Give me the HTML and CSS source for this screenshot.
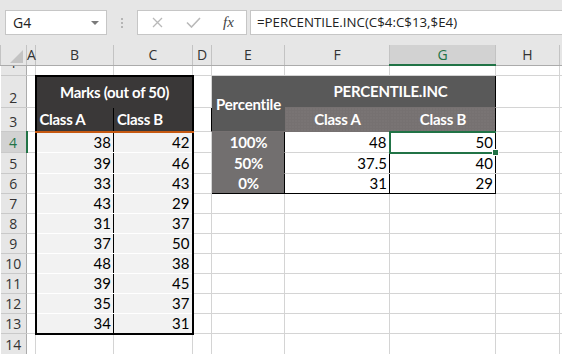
FILE: index.html
```html
<!DOCTYPE html>
<html lang="en">
<head>
    <meta charset="UTF-8">
    <meta name="viewport" content="width=device-width, initial-scale=1.0">
    <title>PERCENTILE.INC</title>
    <link rel="stylesheet" href="styles.css">
</head>
<body>
    <!-- Name box and formula bar -->
    <div class="toolbar">
        <div class="name-box">
            <span>G4</span>
            <span class="drop"></span>
        </div>
        <div class="grip"><span></span><span></span><span></span></div>
        <div class="fx-buttons">
            <svg class="cancel" width="11" height="11" viewBox="0 0 11 11">
                <path d="M1 1 L10 10 M10 1 L1 10" stroke="#b9b9b9" stroke-width="1.3" fill="none"/>
            </svg>
            <svg class="enter" width="15" height="11" viewBox="0 0 15 11">
                <path d="M1 5.5 L5.5 10 L14 1" stroke="#b9b9b9" stroke-width="1.6" fill="none"/>
            </svg>
            <span class="fx">fx</span>
        </div>
        <div class="formula">=PERCENTILE.INC(C$4:C$13,$E4)</div>
    </div>

    <!-- The worksheet grid -->
    <table class="sheet">
        <colgroup>
            <col style="width: 26px">
            <col style="width: 9px">
            <col style="width: 78px">
            <col style="width: 79px">
            <col style="width: 19px">
            <col style="width: 73px">
            <col style="width: 105px">
            <col style="width: 106px">
            <col style="width: 64px">
            <col style="width: 40px">
        </colgroup>
        <tr class="col-head">
            <th class="corner"><span class="tri"></span></th>
            <th class="ch">A</th>
            <th class="ch">B</th>
            <th class="ch">C</th>
            <th class="ch">D</th>
            <th class="ch">E</th>
            <th class="ch">F</th>
            <th class="ch active">G</th>
            <th class="ch">H</th>
            <th class="ch"></th>
        </tr>
        <tr class="row-1">
            <th class="rh"><div class="clip"><div>1</div></div></th>
            <td></td><td></td><td></td><td></td><td></td><td></td><td></td><td></td><td></td>
        </tr>
        <tr class="row-2">
            <th class="rh">2</th>
            <td></td>
            <td class="mk-title" colspan="2">Marks (out of 50)</td>
            <td></td>
            <td class="pc-label" rowspan="2">Percentile</td>
            <td class="pc-title" colspan="2">PERCENTILE.INC</td>
            <td></td><td></td>
        </tr>
        <tr class="row-3">
            <th class="rh">3</th>
            <td></td>
            <td class="mk-head mk-b">Class A</td>
            <td class="mk-head mk-c">Class B</td>
            <td></td>
            <td class="pc-head pc-f">Class A</td>
            <td class="pc-head pc-g">Class B</td>
            <td></td><td></td>
        </tr>
        <tr>
            <th class="rh active">4</th>
            <td></td>
            <td class="mk mk-b">38</td>
            <td class="mk mk-c">42</td>
            <td></td>
            <td class="pc-row">100%</td>
            <td class="pc-val pc-f">48</td>
            <td class="pc-val pc-g sel">50<span class="handle"></span></td>
            <td></td><td></td>
        </tr>
        <tr>
            <th class="rh">5</th>
            <td></td>
            <td class="mk mk-b">39</td>
            <td class="mk mk-c">46</td>
            <td></td>
            <td class="pc-row">50%</td>
            <td class="pc-val pc-f">37.5</td>
            <td class="pc-val pc-g">40</td>
            <td></td><td></td>
        </tr>
        <tr>
            <th class="rh">6</th>
            <td></td>
            <td class="mk mk-b">33</td>
            <td class="mk mk-c">43</td>
            <td></td>
            <td class="pc-row pc-last">0%</td>
            <td class="pc-val pc-f pc-last">31</td>
            <td class="pc-val pc-g pc-last">29</td>
            <td></td><td></td>
        </tr>
        <tr>
            <th class="rh">7</th>
            <td></td>
            <td class="mk mk-b">43</td>
            <td class="mk mk-c">29</td>
            <td></td><td></td><td></td><td></td><td></td><td></td>
        </tr>
        <tr>
            <th class="rh">8</th>
            <td></td>
            <td class="mk mk-b">31</td>
            <td class="mk mk-c">37</td>
            <td></td><td></td><td></td><td></td><td></td><td></td>
        </tr>
        <tr>
            <th class="rh">9</th>
            <td></td>
            <td class="mk mk-b">37</td>
            <td class="mk mk-c">50</td>
            <td></td><td></td><td></td><td></td><td></td><td></td>
        </tr>
        <tr>
            <th class="rh">10</th>
            <td></td>
            <td class="mk mk-b">48</td>
            <td class="mk mk-c">38</td>
            <td></td><td></td><td></td><td></td><td></td><td></td>
        </tr>
        <tr>
            <th class="rh">11</th>
            <td></td>
            <td class="mk mk-b">39</td>
            <td class="mk mk-c">45</td>
            <td></td><td></td><td></td><td></td><td></td><td></td>
        </tr>
        <tr>
            <th class="rh">12</th>
            <td></td>
            <td class="mk mk-b">35</td>
            <td class="mk mk-c">37</td>
            <td></td><td></td><td></td><td></td><td></td><td></td>
        </tr>
        <tr>
            <th class="rh">13</th>
            <td></td>
            <td class="mk mk-b mk-last">34</td>
            <td class="mk mk-c mk-last">31</td>
            <td></td><td></td><td></td><td></td><td></td><td></td>
        </tr>
        <tr>
            <th class="rh">14</th>
            <td></td><td></td><td></td><td></td><td></td><td></td><td></td><td></td><td></td>
        </tr>
        <tr>
            <th class="rh"></th>
            <td></td><td></td><td></td><td></td><td></td><td></td><td></td><td></td><td></td>
        </tr>
    </table>
</body>
</html>
```

FILE: styles.css
```css
/* Page is a fixed window onto the sheet */
body {
    margin: 0;
    width: 562px;
    height: 354px;
    overflow: hidden;
    background-color: #fff;
    font-family: 'Open Sans', 'Noto Sans', sans-serif;
}

/* Name box + formula bar strip */
.toolbar {
    display: flex;
    align-items: center;
    height: 25px;
    padding: 10px 0 10px 5px;
    background-color: #e6e6e6;
}

.name-box {
    display: flex;
    align-items: center;
    justify-content: space-between;
    box-sizing: border-box;
    width: 102px;
    height: 25px;
    padding: 0 7px 0 7px;
    background-color: #fff;
    border: 1px solid #c6c6c6;
    font-size: 14px;
    color: #222;
}

.drop {
    width: 0;
    height: 0;
    border-left: 4px solid transparent;
    border-right: 4px solid transparent;
    border-top: 4px solid #7a7a7a;
}

.grip {
    display: flex;
    flex-direction: column;
    align-items: center;
    gap: 2px;
    width: 30px;
}

.grip span {
    width: 2px;
    height: 2px;
    background-color: #b5b5b5;
}

.fx-buttons {
    display: flex;
    align-items: center;
    box-sizing: border-box;
    width: 110px;
    height: 25px;
    padding-left: 14px;
    background-color: #fff;
    border: 1px solid #c6c6c6;
}

.enter {
    margin-left: 23px;
}

.fx {
    margin-left: 22px;
    font-family: 'Liberation Serif', serif;
    font-style: italic;
    font-size: 15px;
    color: #444;
}

.formula {
    flex: 1;
    box-sizing: border-box;
    height: 25px;
    margin-left: 3px;
    padding-left: 6px;
    background-color: #fff;
    border: 1px solid #c6c6c6;
    border-right: none;
    font-size: 13.3px;
    line-height: 23px;
    color: #222;
    white-space: nowrap;
}

/* Worksheet grid */
.sheet {
    border-collapse: collapse;
    table-layout: fixed;
    width: 599px;
    font-family: 'Lato', sans-serif;
    font-size: 15px;
    color: #000;
}

.sheet td {
    height: 19px;
    padding: 0 2px 0 3px;
    border: 1px solid #d4d4d4;
    white-space: nowrap;
    overflow: hidden;
}

.sheet th {
    padding: 0;
    background-color: #e6e6e6;
    font-family: 'Open Sans', 'Noto Sans', sans-serif;
    font-weight: normal;
    font-size: 14px;
    color: #333;
    text-align: center;
}

.col-head th {
    height: 19px;
    border-top: none;
    border-left: 1px solid #c3c3c3;
    border-right: 1px solid #c3c3c3;
    border-bottom: 1px solid #ababab;
}

.ch.active {
    background-color: #d2d2d2;
    color: #217346;
    border-bottom: 2px solid #217346;
}

.corner {
    position: relative;
}

.tri {
    position: absolute;
    right: 3px;
    bottom: 2px;
    width: 0;
    height: 0;
    border-left: 13px solid transparent;
    border-bottom: 13px solid #c3c3c3;
}

/* Row numbers sit at the bottom of their row, as in Excel */
.rh {
    vertical-align: bottom;
    line-height: 19px;
    border-top: 1px solid #c9c9c9;
    border-bottom: 1px solid #c9c9c9;
    border-right: 1px solid #ababab;
}

.rh.active {
    background-color: #d2d2d2;
    color: #217346;
    border-right: 2px solid #217346;
}

.row-1 td {
    height: 9px;
}

.row-1 .clip {
    height: 9px;
    overflow: hidden;
}

.row-1 .clip div {
    line-height: 20px;
    margin-top: -13px;
}

.row-2 td {
    height: 30px;
}

.row-3 td {
    height: 23px;
}

/* Marks table B2:C13 */
.sheet .mk-title,
.sheet .mk-head {
    background-color: #3a3838;
    color: #fff;
    font-weight: bold;
    letter-spacing: -0.3px;
}

.sheet .mk-title {
    text-align: center;
    border: 2px solid #000;
    border-bottom: 1px solid #3a3838;
}

.sheet .mk-head {
    border-bottom: 2px solid #c65911;
}

.sheet .mk {
    background-color: #f2f2f2;
    text-align: right;
    border-top: 1px solid #fff;
    border-bottom: 1px solid #fff;
}

.sheet .mk-b {
    border-left: 2px solid #000;
    border-right: 1px solid #000;
}

.sheet .mk-c {
    border-left: 1px solid #000;
    border-right: 2px solid #000;
}

.sheet .mk-last {
    border-bottom: 2px solid #000;
}

/* Percentile table E2:G6 */
.sheet .pc-label,
.sheet .pc-title,
.sheet .pc-head,
.sheet .pc-row {
    color: #fff;
    font-weight: bold;
    text-align: center;
    letter-spacing: -0.2px;
}

.sheet .pc-label {
    background-color: #595959;
    border-top: 1px solid #000;
    border-left: 1px solid #000;
    border-right: 1px solid #595959;
    border-bottom: 1px solid #767171;
}

.sheet .pc-title {
    background-color: #595959;
    border-top: 1px solid #000;
    border-right: 1px solid #000;
    border-bottom: 1px solid #767171;
}

.sheet .pc-head {
    background-color: #767171;
    background-image: radial-gradient(circle, rgba(255, 255, 255, 0.08) 0.6px, transparent 0.8px);
    background-size: 3px 3px;
    border-color: #767171;
}

.sheet .pc-head.pc-g {
    border-right: 1px solid #000;
}

.sheet .pc-row {
    background-color: #726f6f;
    border-left: 1px solid #000;
    border-right: 1px solid #000;
    border-top: 1px solid #726f6f;
    border-bottom: 1px solid #726f6f;
}

.sheet .pc-val {
    text-align: right;
}

.sheet .pc-val.pc-f,
.sheet .pc-val.pc-g {
    border-right: 1px solid #000;
}

.sheet .pc-last {
    border-bottom: 1px solid #000;
}

/* Active cell G4 */
.sheet .sel {
    position: relative;
    overflow: visible;
    border: 2px solid #217346;
}

.handle {
    position: absolute;
    right: -4px;
    bottom: -4px;
    width: 5px;
    height: 5px;
    background-color: #217346;
    border: 1px solid #fff;
}
```
